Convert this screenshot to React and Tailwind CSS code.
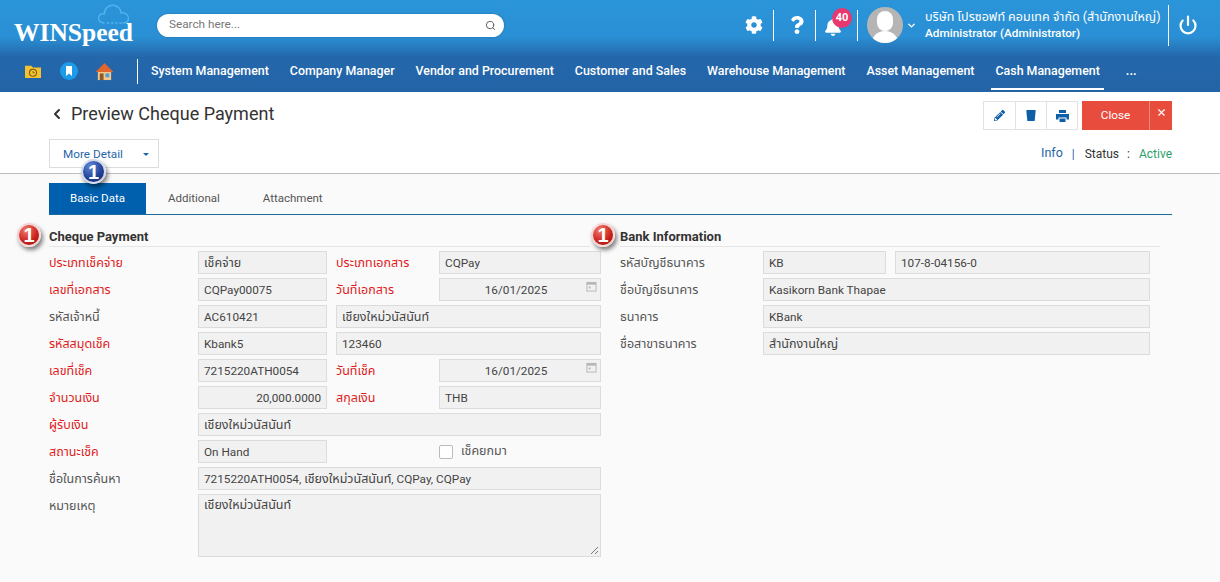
import React from "react";
import { X, ChevronLeft, ChevronDown, Search, Power } from "lucide-react";
import { FaCog, FaBell, FaQuestion, FaPencilAlt } from "react-icons/fa";

const font = "font-['Roboto','Noto_Sans_Thai','Noto_Sans','Open_Sans','DejaVu_Sans',sans-serif]";

function Badge({ color, size }) {
  const bg = color === "blue"
    ? "bg-[radial-gradient(circle_at_35%_25%,#5f86d8,#1f3f94_60%,#14296b)]"
    : "bg-[radial-gradient(circle_at_35%_25%,#f07a6a,#c9201b_60%,#8f1210)]";
  return (
    <span className={`flex items-center justify-center rounded-full border-2 border-white/80 text-[20px] font-bold leading-none text-white shadow-[2px_3px_4px_rgba(0,0,0,0.5)] ${size} ${bg} font-['Liberation_Sans',sans-serif]`}>
      1
    </span>
  );
}

function Field({ w, children, align = "left", date, th }) {
  const a = align === "right" ? "justify-end" : align === "center" ? "justify-center" : "justify-start";
  return (
    <div className={`relative flex h-[23px] items-center border border-[#dcdcdc] bg-[#f1f1f1] px-[5px] pt-[2px] text-[#444] ${th ? "text-[12.5px]" : "text-[11.75px]"} ${a} ${w}`}>
      <span className={date ? "pr-[8px]" : ""}>{children}</span>
      {date && (
        <svg viewBox="0 0 12 12" className="absolute right-[3px] top-[2px] h-[11px] w-[11px]">
          <rect x="1" y="1.5" width="10" height="9.5" fill="none" stroke="#b5b5b5" />
          <rect x="1" y="1.5" width="10" height="2.5" fill="#b5b5b5" />
          <rect x="3" y="6" width="2" height="2" fill="#b5b5b5" />
        </svg>
      )}
    </div>
  );
}

function Label({ red, w = "w-[149px]", children }) {
  return <div className={`shrink-0 pt-[2px] text-[12.5px] ${w} ${red ? "text-[#e01b1b]" : "text-[#555]"}`}>{children}</div>;
}

function Row({ children }) {
  return <div className="flex h-[23px] items-center">{children}</div>;
}

function Section({ title, badgeClass, line, children, w }) {
  return (
    <section className={`relative ${w}`}>
      <span className={`absolute top-[-6px] ${badgeClass}`}><Badge color="red" size="h-[24px] w-[24px]" /></span>
      <h2 className="flex h-[16px] items-center text-[13px] font-bold text-[#333]">{title}</h2>
      <div className={`mt-[1px] h-px bg-[#e6e6e6] ${line}`} />
      <div className="mt-[4px] flex flex-col gap-[4px]">{children}</div>
    </section>
  );
}

function Logo() {
  return (
    <div className="relative h-[50px] w-[157px] shrink-0">
      <svg viewBox="0 0 40 30" className="absolute left-[96px] top-[3px] h-[25px] w-[35px]" fill="none" stroke="#4fb2ee" strokeWidth="1.8">
        <path d="M9 24 C3 24 1 19 2.500 16 C4 13 7 12.500 9 13 C9 6 15 2 21 3 C26 4 29 8 29 12 C33 11 38 14 38 18 C38 22 35 24 31 24" />
        <path d="M12 24 H30" strokeDasharray="3 2" />
      </svg>
      <span className="absolute left-[14px] top-[17px] font-['Liberation_Serif',serif] text-[25.500px] font-bold leading-[32px] text-white">WINSpeed</span>
    </div>
  );
}

function Sep({ h = "h-[31px]" }) {
  return <div className={`w-px bg-white ${h}`} />;
}

export default function App() {
  return (
    <div className={`h-[582px] w-[1220px] overflow-hidden bg-[#fafafa] ${font}`}>
      <header className="h-[92px] bg-[linear-gradient(#2b95da_0%,#2a8fd4_40%,#2467ab_62%,#2264a6_100%)] text-white">
        <div className="flex h-[50px] items-center">
          <Logo />
          <div className="flex h-[23px] w-[347px] items-center justify-between rounded-full bg-white pl-[12px] pr-[8px] text-[11.75px] text-[#777] shadow-[0_0_2px_rgba(0,0,0,0.3)]">
            <span>Search here...</span>
            <Search size={11} className="text-[#555]" />
          </div>
          <div className="ml-auto flex items-center">
            <FaCog size={18} className="mr-[10px]" />
            <Sep />
            <span className="flex w-[41px] justify-center pl-[5px]"><FaQuestion size={18} /></span>
            <Sep />
            <div className="relative h-[32px] w-[41px]">
              <FaBell size={18} className="absolute left-[8px] top-[9px]" />
              <span className="absolute left-[16px] top-[-1px] flex h-[20px] w-[20px] items-center justify-center rounded-full bg-[#e8386d] text-[11px] font-bold">40</span>
            </div>
            <Sep />
            <div className="relative ml-[9px] h-[36px] w-[36px] overflow-hidden rounded-full bg-[#b5b5b5]">
              <div className="absolute left-[10px] top-[4px] h-[20px] w-[16px] rounded-full bg-white" />
              <div className="absolute left-[4px] top-[24px] h-[14px] w-[28px] rounded-t-full bg-white" />
            </div>
            <ChevronDown size={11} strokeWidth={3} className="ml-[3px] mr-[8px]" />
            <div className="w-[243px] whitespace-nowrap text-[12.5px] leading-[16px]">
              <div>บริษัท โปรซอฟท์ คอมเทค จำกัด (สำนักงานใหญ่)</div>
              <div className="text-[11.75px] font-medium">Administrator (Administrator)</div>
            </div>
            <Sep h="h-[41px]" />
            <Power size={20} strokeWidth={2.6} className="ml-[9px] mr-[22px]" />
          </div>
        </div>
        <nav className="flex h-[42px] items-center pl-[24px] text-[12.4px] font-medium">
          <svg viewBox="0 0 20 18" className="h-[16px] w-[18px]">
            <path d="M1 3 H8 L10 5 H19 V17 H1 Z" fill="#f2c230" />
            <circle cx="10" cy="11" r="4" fill="none" stroke="#7a5c10" strokeWidth="1.2" />
            <path d="M10 9 V11 H12" stroke="#7a5c10" fill="none" />
          </svg>
          <svg viewBox="0 0 18 18" className="ml-[18px] h-[18px] w-[18px]">
            <circle cx="9" cy="9" r="9" fill="#1e9be8" />
            <path d="M6 4 H12 V14 L9 11.500 L6 14 Z" fill="#fff" />
          </svg>
          <svg viewBox="0 0 20 20" className="ml-[17px] h-[19px] w-[19px]">
            <path d="M3 10 H17 V19 H3 Z" fill="#f2c78a" />
            <path d="M0.500 10.500 L10 1 L19.500 10.500 Z" fill="#e0662c" />
            <rect x="5" y="12" width="4" height="7" fill="#8a5a2a" />
            <rect x="11" y="12" width="4" height="4" fill="#4d9fd6" />
          </svg>
          <div className="ml-[23px] mr-[13px] h-[25px] w-px bg-white" />
          <span className="mr-[21px]">System Management</span>
          <span className="mr-[21px]">Company Manager</span>
          <span className="mr-[21px]">Vendor and Procurement</span>
          <span className="mr-[21px]">Customer and Sales</span>
          <span className="mr-[21px]">Warehouse Management</span>
          <span className="mr-[21px]">Asset Management</span>
          <span className="relative flex h-full items-center">
            Cash Management
            <span className="absolute bottom-[2px] left-[-5px] right-[-4px] h-[2px] bg-white" />
          </span>
          <span className="ml-[26px] font-bold">...</span>
        </nav>
      </header>

      <div className="relative h-[82px] border-b border-[#bdbdbd] bg-white pl-[49px] pr-[48px]">
        <div className="flex items-start justify-between">
          <div className="mt-[9px] flex items-center text-[#333]">
            <ChevronLeft size={16} strokeWidth={3} className="mr-[6px]" />
            <h1 className="text-[18px] leading-[26px]">Preview Cheque Payment</h1>
          </div>
          <div className="mt-[9px] flex items-center">
            <div className="flex h-[29px] border border-[#e3e3e3] text-[#0f5fa8]">
              <span className="flex w-[31px] items-center justify-center"><FaPencilAlt size={11} /></span>
              <span className="flex w-[31px] items-center justify-center border-l border-[#e3e3e3]">
                <svg viewBox="0 0 10 12" className="h-[11px] w-[10px]"><path d="M0 0 H10 V1.500 L9 12 H1 L0 1.500 Z" fill="currentColor" /></svg>
              </span>
              <span className="flex w-[31px] items-center justify-center border-l border-[#e3e3e3]">
                <svg viewBox="0 0 13 12" className="h-[12px] w-[13px]">
                  <path d="M3 0 H10 V3 H3 Z M0 4 H13 V9.500 H10.500 V7.500 H2.500 V9.500 H0 Z M3.500 8.500 H9.500 V12 H3.500 Z" fill="currentColor" />
                </svg>
              </span>
            </div>
            <div className="ml-[4px] flex h-[29px] bg-[#e84c3d] text-white">
              <span className="flex w-[67px] items-center justify-center text-[11.75px]">Close</span>
              <span className="flex w-[23px] justify-center border-l border-[#f08a7f] pt-[6px]"><X size={11} strokeWidth={2.5} /></span>
            </div>
          </div>
        </div>
        <div className="mt-[9px] flex items-center justify-between">
          <div className="flex h-[29px] w-[110px] items-center border border-[#ddd] pl-[13px] pt-[2px] text-[11.75px] text-[#1f66a8]">
            <span className="w-[80px]">More Detail</span>
            <svg viewBox="0 0 8 4" className="h-[3px] w-[6px]"><path d="M0 0 H8 L4 4 Z" fill="#1f66a8" /></svg>
          </div>
          <div className="flex items-center text-[12px] text-[#333]">
            <span className="mr-[9px] text-[12.5px] text-[#1f66a8]">Info</span>
            <span className="mr-[10px] text-[#1f66a8]">|</span>
            <span>Status</span>
            <span className="ml-[8px] mr-[9px]">:</span>
            <span className="text-[#2e9e6b]">Active</span>
          </div>
        </div>
        <span className="absolute left-[81px] top-[67px] z-10"><Badge color="blue" size="h-[25px] w-[25px]" /></span>
      </div>

      <main className="px-[49px] pt-[9px]">
        <div className="flex h-[32px] w-[1123px] border-b border-[#1a6a9a] text-[11.5px] text-[#555]">
          <span className="flex w-[97px] items-center justify-center bg-[#0060ad] text-white">Basic Data</span>
          <span className="ml-[22px] flex items-center">Additional</span>
          <span className="ml-[43px] flex items-center">Attachment</span>
        </div>

        <div className="mt-[14px] flex">
          <Section title="Cheque Payment" w="w-[571px]" badgeClass="left-[-32px]" line="w-[541px]">
            <Row><Label red>ประเภทเช็คจ่าย</Label><Field th w="w-[129px]">เช็คจ่าย</Field><Label red w="ml-[9px] w-[103px]">ประเภทเอกสาร</Label><Field w="w-[162px]">CQPay</Field></Row>
            <Row><Label red>เลขที่เอกสาร</Label><Field w="w-[129px]">CQPay00075</Field><Label red w="ml-[9px] w-[103px]">วันที่เอกสาร</Label><Field w="w-[162px]" align="center" date>16/01/2025</Field></Row>
            <Row><Label>รหัสเจ้าหนี้</Label><Field w="w-[129px]">AC610421</Field><Field th w="ml-[9px] w-[265px]">เชียงใหม่วนัสนันท์</Field></Row>
            <Row><Label red>รหัสสมุดเช็ค</Label><Field w="w-[129px]">Kbank5</Field><Field w="ml-[9px] w-[265px]">123460</Field></Row>
            <Row><Label red>เลขที่เช็ค</Label><Field w="w-[129px]">7215220ATH0054</Field><Label red w="ml-[9px] w-[103px]">วันที่เช็ค</Label><Field w="w-[162px]" align="center" date>16/01/2025</Field></Row>
            <Row><Label red>จำนวนเงิน</Label><Field w="w-[129px]" align="right">20,000.0000</Field><Label red w="ml-[9px] w-[103px]">สกุลเงิน</Label><Field w="w-[162px]">THB</Field></Row>
            <Row><Label red>ผู้รับเงิน</Label><Field th w="w-[403px]">เชียงใหม่วนัสนันท์</Field></Row>
            <Row>
              <Label red>สถานะเช็ค</Label><Field w="w-[129px]">On Hand</Field>
              <span className="ml-[112px] h-[14px] w-[14px] rounded-[2px] border border-[#bbb] bg-white" />
              <span className="ml-[8px] text-[12.5px] text-[#555]">เช็คยกมา</span>
            </Row>
            <Row><Label>ชื่อในการค้นหา</Label><Field w="w-[403px]">7215220ATH0054, <span className="text-[12.5px]">เชียงใหม่วนัสนันท์</span>, CQPay, CQPay</Field></Row>
            <div className="flex items-start">
              <Label w="w-[149px] mt-[1px]">หมายเหตุ</Label>
              <div className="relative h-[63px] w-[403px] border border-[#dcdcdc] bg-[#f1f1f1] px-[5px] pt-[1px] text-[12.5px] text-[#444]">
                เชียงใหม่วนัสนันท์
                <svg viewBox="0 0 9 9" className="absolute bottom-[1px] right-[1px] h-[9px] w-[9px]" stroke="#777" fill="none">
                  <path d="M1 8 L8 1 M5 8 L8 5" />
                </svg>
              </div>
            </div>
          </Section>
          <Section title="Bank Information" w="w-[540px]" badgeClass="left-[-29px]" line="w-[540px]">
            <Row><Label w="w-[143px]">รหัสบัญชีธนาคาร</Label><Field w="w-[123px]">KB</Field><Field w="ml-[9px] w-[255px]">107-8-04156-0</Field></Row>
            <Row><Label w="w-[143px]">ชื่อบัญชีธนาคาร</Label><Field w="w-[387px]">Kasikorn Bank Thapae</Field></Row>
            <Row><Label w="w-[143px]">ธนาคาร</Label><Field w="w-[387px]">KBank</Field></Row>
            <Row><Label w="w-[143px]">ชื่อสาขาธนาคาร</Label><Field th w="w-[387px]">สำนักงานใหญ่</Field></Row>
          </Section>
        </div>
      </main>
    </div>
  );
}
